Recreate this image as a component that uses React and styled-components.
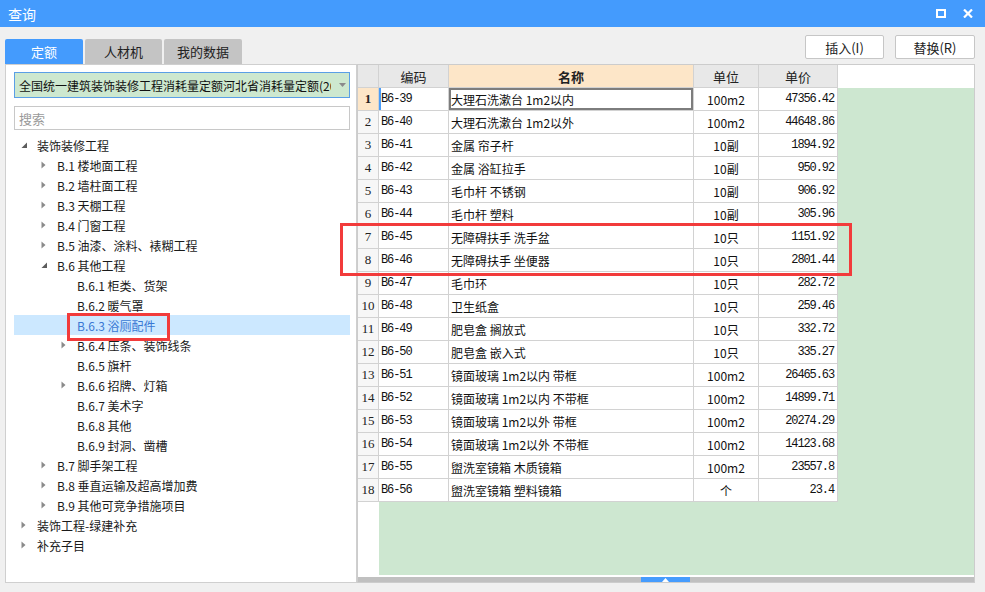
import styled, { createGlobalStyle } from 'styled-components';

const GlobalStyle = createGlobalStyle`
  html, body {
    margin: 0;
    padding: 0;
  }
  body {
    background: #f0f0f0;
    font-family: "Noto Sans CJK SC", "Noto Sans", sans-serif;
    overflow: hidden;
  }
`;

const Window = styled.div`
  position: relative;
  width: 985px;
  height: 592px;
  background: #f0f0f0;
  display: flex;
  flex-direction: column;
`;

const TitleBar = styled.div`
  height: 27px;
  flex: none;
  background: #449bfd;
  display: flex;
  align-items: center;
  padding: 0 12px 0 8px;
  color: #fff;
  font-size: 14px;
`;

const TitleText = styled.span`
  flex: 1;
`;

const TitleButtons = styled.div`
  display: flex;
  align-items: center;
  gap: 17px;
`;

const Content = styled.div`
  flex: 1;
  display: flex;
  padding: 0 10px 9px 5px;
  min-height: 0;
`;

const LeftCol = styled.div`
  width: 352px;
  display: flex;
  flex-direction: column;
`;

const Tabs = styled.div`
  display: flex;
  gap: 2px;
  margin-top: 12px;
  height: 25px;
`;

const Tab = styled.div`
  width: ${(p) => p.$w}px;
  display: flex;
  align-items: center;
  justify-content: center;
  font-size: 13px;
  border-radius: 2px 2px 0 0;
  background: ${(p) => (p.$active ? '#449bfd' : '#c4c4c4')};
  color: ${(p) => (p.$active ? '#fff' : '#222')};
`;

const LeftPanel = styled.div`
  flex: 1;
  background: #fff;
  border: 1px solid #cfcfcf;
  padding: 7px 6px 0 8px;
  display: flex;
  flex-direction: column;
`;

const Select = styled.div`
  height: 24px;
  border: 1px solid #5a9fe6;
  background: #cde8cf;
  display: flex;
  align-items: center;
  padding: 0 0 0 4px;
  font-size: 12px;
  color: #111;
  overflow: hidden;
`;

const SelectText = styled.span`
  flex: 1;
  white-space: nowrap;
  overflow: hidden;
  margin-right: 4px;
`;

const SelectArrow = styled.span`
  width: 14px;
  flex: none;
  display: flex;
  justify-content: center;
  align-items: center;
`;

const Search = styled.div`
  margin-top: 8px;
  height: 22px;
  border: 1px solid #c8c8c8;
  display: flex;
  align-items: center;
  padding-left: 4px;
  font-size: 13px;
  color: #9a9a9a;
`;

const Tree = styled.div`
  margin-top: 5px;
  display: flex;
  flex-direction: column;
`;

const TreeRow = styled.div`
  height: 20px;
  display: flex;
  align-items: center;
  padding-left: ${(p) => 7 + p.$level * 20}px;
  font-size: 12px;
  color: ${(p) => (p.$selected ? '#3a78d4' : '#1a1a1a')};
  background: ${(p) => (p.$selected ? '#cce8ff' : 'transparent')};
  white-space: nowrap;
`;

const Toggle = styled.span`
  width: 16px;
  flex: none;
  display: flex;
  align-items: center;
`;

const RightCol = styled.div`
  flex: 1;
  display: flex;
  flex-direction: column;
  min-width: 0;
`;

const Toolbar = styled.div`
  height: 37px;
  display: flex;
  justify-content: flex-end;
  align-items: flex-start;
  padding-top: 8px;
  gap: 11px;
  box-sizing: border-box;
`;

const Button = styled.button`
  width: ${(p) => p.$w}px;
  height: 24px;
  background: #fff;
  border: 1px solid #c6c6c6;
  border-radius: 2px;
  font-family: "Noto Sans CJK SC", "Noto Sans", sans-serif;
  font-size: 13px;
  color: #222;
  padding: 0;
`;

const GridPanel = styled.div`
  flex: 1;
  background: #fff;
  border: 1px solid #cccccc;
  display: flex;
  flex-direction: column;
  min-height: 0;
`;

const HeaderRow = styled.div`
  display: flex;
  height: 23px;
  flex: none;
`;

const HeadCell = styled.div`
  width: ${(p) => p.$w}px;
  flex: none;
  box-sizing: border-box;
  border-right: 1px solid #d2d2d2;
  border-bottom: 1px solid #d2d2d2;
  background: ${(p) => (p.$active ? '#fde6c8' : '#e8e8e8')};
  font-weight: ${(p) => (p.$active ? 700 : 400)};
  display: flex;
  align-items: center;
  justify-content: center;
  font-size: 13px;
  color: #222;
`;

const Body = styled.div`
  flex: 1;
  background: linear-gradient(to right, #fff 21px, #cde7d0 21px);
  display: flex;
  flex-direction: column;
`;

const Row = styled.div`
  display: flex;
  height: 23px;
  flex: none;
`;

const Cell = styled.div`
  width: ${(p) => p.$w}px;
  flex: none;
  box-sizing: border-box;
  border-right: 1px solid #d2d2d2;
  border-bottom: 1px solid #d2d2d2;
  background: #fff;
  display: flex;
  align-items: center;
  justify-content: ${(p) => p.$align || 'flex-start'};
  padding: 0 ${(p) => (p.$align === 'flex-end' ? 3 : 2)}px;
  font-family: ${(p) =>
    p.$mono
      ? '"Liberation Mono", "Noto Sans CJK SC", monospace'
      : '"Noto Sans CJK SC", "Noto Sans", sans-serif'};
  font-size: 12px;
  letter-spacing: ${(p) => (p.$mono ? '-1.1px' : 'normal')};
  color: #111;
  white-space: nowrap;
  box-shadow: ${(p) => p.$shadow || 'none'};
`;

const NumCell = styled.div`
  width: 21px;
  flex: none;
  box-sizing: border-box;
  border-right: 1px solid #d2d2d2;
  border-bottom: 1px solid #d2d2d2;
  background: ${(p) => (p.$active ? '#fde6c8' : '#f7f7f7')};
  font-weight: ${(p) => (p.$active ? 700 : 400)};
  display: flex;
  align-items: center;
  justify-content: center;
  font-family: "Liberation Serif", serif;
  font-size: 13px;
  color: #222;
`;

const GapLine = styled.div`
  height: 2px;
  flex: none;
  background: #fff;
`;

const Scrollbar = styled.div`
  height: 5px;
  flex: none;
  background: #c0c0c0;
  position: relative;
`;

const Thumb = styled.div`
  position: absolute;
  left: 283px;
  top: 0;
  width: 49px;
  height: 5px;
  background: #469cfd;
  display: flex;
  justify-content: center;
  align-items: center;
`;

const Grip = styled.div`
  position: absolute;
  right: 1px;
  bottom: 1px;
  width: 9px;
  height: 9px;
`;

const Mark = styled.div`
  position: absolute;
  border: 3px solid #f23b3b;
  pointer-events: none;
`;

const cols = [
  { key: 'code', w: 70, label: '编码', mono: true },
  { key: 'name', w: 245, label: '名称', active: true },
  { key: 'unit', w: 65, label: '单位', align: 'center' },
  { key: 'price', w: 79, label: '单价', align: 'flex-end', mono: true },
];

const rows = [
  ['B6-39', '大理石洗漱台 1m2以内', '100m2', '47356.42'],
  ['B6-40', '大理石洗漱台 1m2以外', '100m2', '44648.86'],
  ['B6-41', '金属 帘子杆', '10副', '1894.92'],
  ['B6-42', '金属 浴缸拉手', '10副', '950.92'],
  ['B6-43', '毛巾杆 不锈钢', '10副', '906.92'],
  ['B6-44', '毛巾杆 塑料', '10副', '305.96'],
  ['B6-45', '无障碍扶手 洗手盆', '10只', '1151.92'],
  ['B6-46', '无障碍扶手 坐便器', '10只', '2801.44'],
  ['B6-47', '毛巾环', '10只', '282.72'],
  ['B6-48', '卫生纸盒', '10只', '259.46'],
  ['B6-49', '肥皂盒 搁放式', '10只', '332.72'],
  ['B6-50', '肥皂盒 嵌入式', '10只', '335.27'],
  ['B6-51', '镜面玻璃 1m2以内 带框', '100m2', '26465.63'],
  ['B6-52', '镜面玻璃 1m2以内 不带框', '100m2', '14899.71'],
  ['B6-53', '镜面玻璃 1m2以外 带框', '100m2', '20274.29'],
  ['B6-54', '镜面玻璃 1m2以外 不带框', '100m2', '14123.68'],
  ['B6-55', '盥洗室镜箱 木质镜箱', '100m2', '23557.8'],
  ['B6-56', '盥洗室镜箱 塑料镜箱', '个', '23.4'],
];

const tree = [
  { level: 0, toggle: 'open', text: '装饰装修工程' },
  { level: 1, toggle: 'closed', text: 'B.1 楼地面工程' },
  { level: 1, toggle: 'closed', text: 'B.2 墙柱面工程' },
  { level: 1, toggle: 'closed', text: 'B.3 天棚工程' },
  { level: 1, toggle: 'closed', text: 'B.4 门窗工程' },
  { level: 1, toggle: 'closed', text: 'B.5 油漆、涂料、裱糊工程' },
  { level: 1, toggle: 'open', text: 'B.6 其他工程' },
  { level: 2, text: 'B.6.1 柜类、货架' },
  { level: 2, text: 'B.6.2 暖气罩' },
  { level: 2, text: 'B.6.3 浴厕配件', selected: true },
  { level: 2, toggle: 'closed', text: 'B.6.4 压条、装饰线条' },
  { level: 2, text: 'B.6.5 旗杆' },
  { level: 2, toggle: 'closed', text: 'B.6.6 招牌、灯箱' },
  { level: 2, text: 'B.6.7 美术字' },
  { level: 2, text: 'B.6.8 其他' },
  { level: 2, text: 'B.6.9 封洞、凿槽' },
  { level: 1, toggle: 'closed', text: 'B.7 脚手架工程' },
  { level: 1, toggle: 'closed', text: 'B.8 垂直运输及超高增加费' },
  { level: 1, toggle: 'closed', text: 'B.9 其他可竞争措施项目' },
  { level: 0, toggle: 'closed', text: '装饰工程-绿建补充' },
  { level: 0, toggle: 'closed', text: '补充子目' },
];

function ToggleIcon({ type }) {
  if (type === 'open') {
    return (
      <svg width="7" height="7" viewBox="0 0 7 7">
        <polygon points="6,0.5 6,6 0.5,6" fill="#5c5c5c" />
      </svg>
    );
  }
  if (type === 'closed') {
    return (
      <svg width="5" height="8" viewBox="0 0 5 8">
        <polygon points="0.5,0.5 4.5,4 0.5,7.5" fill="#8a8a8a" />
      </svg>
    );
  }
  return null;
}

function GridRow({ index, data }) {
  const first = index === 0;
  return (
    <Row>
      <NumCell $active={first}>{index + 1}</NumCell>
      {cols.map((c, i) => {
        let shadow;
        if (first && c.key === 'code') shadow = 'inset 2px 0 0 #4a9df8';
        if (first && c.key === 'name') shadow = 'inset 0 0 0 2px #7d7d7d';
        return (
          <Cell key={c.key} $w={c.w} $align={c.align} $mono={c.mono} $shadow={shadow}>
            {data[i]}
          </Cell>
        );
      })}
    </Row>
  );
}

export default function App() {
  return (
    <Window>
      <GlobalStyle />
      <TitleBar>
        <TitleText>查询</TitleText>
        <TitleButtons>
          <svg width="10" height="9" viewBox="0 0 10 9">
            <rect x="1" y="1" width="8" height="7" fill="none" stroke="#fff" strokeWidth="2" />
          </svg>
          <svg width="10" height="9" viewBox="0 0 10 9">
            <path d="M1 0.5 L9 8.5 M9 0.5 L1 8.5" stroke="#fff" strokeWidth="2.2" />
          </svg>
        </TitleButtons>
      </TitleBar>
      <Content>
        <LeftCol>
          <Tabs>
            <Tab $w={78} $active>定额</Tab>
            <Tab $w={77}>人材机</Tab>
            <Tab $w={78}>我的数据</Tab>
          </Tabs>
          <LeftPanel>
            <Select>
              <SelectText>全国统一建筑装饰装修工程消耗量定额河北省消耗量定额(2012)</SelectText>
              <SelectArrow>
                <svg width="7" height="4" viewBox="0 0 7 4">
                  <polygon points="0,0 7,0 3.5,4" fill="#8a8a8a" />
                </svg>
              </SelectArrow>
            </Select>
            <Search>搜索</Search>
            <Tree>
              {tree.map((t) => (
                <TreeRow key={t.text} $level={t.level} $selected={t.selected}>
                  <Toggle>
                    <ToggleIcon type={t.toggle} />
                  </Toggle>
                  {t.text}
                </TreeRow>
              ))}
            </Tree>
          </LeftPanel>
        </LeftCol>
        <RightCol>
          <Toolbar>
            <Button $w={79}>插入(I)</Button>
            <Button $w={80}>替换(R)</Button>
          </Toolbar>
          <GridPanel>
            <HeaderRow>
              <HeadCell $w={21} />
              {cols.map((c) => (
                <HeadCell key={c.key} $w={c.w} $active={c.active}>
                  {c.label}
                </HeadCell>
              ))}
            </HeaderRow>
            <Body>
              {rows.map((r, i) => (
                <GridRow key={r[0]} index={i} data={r} />
              ))}
            </Body>
            <GapLine />
            <Scrollbar>
              <Thumb>
                <svg width="7" height="4" viewBox="0 0 7 4">
                  <polygon points="3.5,0 7,4 0,4" fill="#fff" />
                </svg>
              </Thumb>
            </Scrollbar>
          </GridPanel>
        </RightCol>
      </Content>
      <Grip>
        <svg width="9" height="9" viewBox="0 0 9 9">
          <rect x="6" y="0" width="2" height="2" fill="#9a9a9a" />
          <rect x="3" y="3" width="2" height="2" fill="#9a9a9a" />
          <rect x="6" y="3" width="2" height="2" fill="#9a9a9a" />
          <rect x="0" y="6" width="2" height="2" fill="#9a9a9a" />
          <rect x="3" y="6" width="2" height="2" fill="#9a9a9a" />
          <rect x="6" y="6" width="2" height="2" fill="#9a9a9a" />
        </svg>
      </Grip>
      <Mark style={{ left: 67, top: 313, width: 97, height: 22 }} />
      <Mark style={{ left: 340, top: 223, width: 506, height: 47 }} />
    </Window>
  );
}
